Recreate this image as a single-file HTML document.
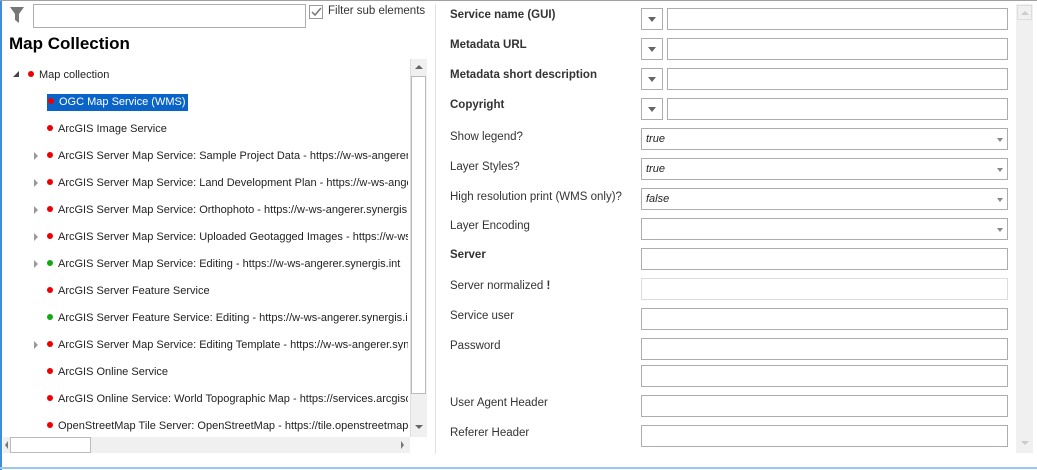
<!DOCTYPE html><html><head><style>
body{margin:0;width:1037px;height:470px;background:#fff;position:relative;overflow:hidden;font-family:"Liberation Sans",sans-serif;font-size:11px;color:#222}
.a{position:absolute}
.row{position:absolute;left:0;height:18px;line-height:18px;white-space:nowrap}
.dot{display:inline-block;width:6px;height:6px;border-radius:3px;background:#e00;margin-right:5px;vertical-align:1px}
.g{background:#1a1}
.tri{position:absolute;left:-13px;top:5px;width:0;height:0;border-left:4px solid #999;border-top:4px solid transparent;border-bottom:4px solid transparent}
.lbl{position:absolute;left:450px;font-size:11.5px;color:#333}
.b{font-weight:bold}
.box{position:absolute;border:1px solid #abadb3;background:#fff;box-sizing:border-box}
.btn{position:absolute;left:641px;width:22px;height:22px;border:1px solid #abadb3;box-sizing:border-box;background:#fff}
.btn:after{content:"";position:absolute;left:6px;top:8px;border-top:5px solid #666;border-left:4px solid transparent;border-right:4px solid transparent}
.cmb:after{content:"";position:absolute;right:4px;top:9px;border-top:4px solid #888;border-left:3px solid transparent;border-right:3px solid transparent}
.it{font-style:italic;padding-left:4px;line-height:20px}
</style></head><body>
<div class="a" style="left:0;top:0;width:2px;height:470px;background:#3c8fd8"></div>
<div class="a" style="left:0;top:467px;width:1037px;height:2px;background:#9cc6ea"></div>
<div class="a" style="left:0;top:0;width:1037px;height:1px;background:#a0a0a0"></div>
<div class="a" style="left:435px;top:4px;width:1px;height:450px;background:#e3e3e3"></div>
<svg class="a" style="left:9px;top:6px" width="16" height="18"><path d="M1 1h14l-5 7v9l-4-3V8z" fill="#777"/></svg>
<div class="box" style="left:33px;top:4px;width:273px;height:24px"></div>
<div class="box" style="left:309px;top:5px;width:14px;height:14px;border-color:#999"></div>
<svg class="a" style="left:311px;top:7px" width="11" height="10"><path d="M1 5l3 3 6-7" stroke="#777" stroke-width="1.5" fill="none"/></svg>
<div class="a" style="left:328px;top:5px;font-size:11.5px;color:#333">Filter sub elements</div>
<div class="a" style="left:9px;top:34px;font-size:17px;font-weight:bold;color:#000">Map Collection</div>
<div class="a" style="left:13px;top:71px;width:0;height:0;border-right:6px solid #444;border-top:6px solid transparent"></div>
<div class="row" style="left:28px;top:66px"><span class="dot"></span>Map collection</div>
<div class="row" style="left:47px;top:93px;color:#fff"><span style="background:#0a64c8;display:inline-block;padding:0 2px 0 1px;line-height:17px"><span class="dot"></span>OGC Map Service (WMS)</span></div>
<div class="a" style="left:0;top:110px;width:408px;height:330px;overflow:hidden">
<div class="row" style="left:47px;top:10px"><span class="dot"></span>ArcGIS Image Service</div>
<div class="row" style="left:47px;top:37px"><i class="tri"></i><span class="dot"></span>ArcGIS Server Map Service: Sample Project Data - https://w-ws-angerer.synergis.int</div>
<div class="row" style="left:47px;top:64px"><i class="tri"></i><span class="dot"></span>ArcGIS Server Map Service: Land Development Plan - https://w-ws-angerer</div>
<div class="row" style="left:47px;top:91px"><i class="tri"></i><span class="dot"></span>ArcGIS Server Map Service: Orthophoto - https://w-ws-angerer.synergis.int</div>
<div class="row" style="left:47px;top:118px"><i class="tri"></i><span class="dot"></span>ArcGIS Server Map Service: Uploaded Geotagged Images - https://w-ws</div>
<div class="row" style="left:47px;top:145px"><i class="tri"></i><span class="dot g"></span>ArcGIS Server Map Service: Editing - https://w-ws-angerer.synergis.int</div>
<div class="row" style="left:47px;top:172px"><span class="dot"></span>ArcGIS Server Feature Service</div>
<div class="row" style="left:47px;top:199px"><span class="dot g"></span>ArcGIS Server Feature Service: Editing - https://w-ws-angerer.synergis.int</div>
<div class="row" style="left:47px;top:226px"><i class="tri"></i><span class="dot"></span>ArcGIS Server Map Service: Editing Template - https://w-ws-angerer.synergis</div>
<div class="row" style="left:47px;top:253px"><span class="dot"></span>ArcGIS Online Service</div>
<div class="row" style="left:47px;top:280px"><span class="dot"></span>ArcGIS Online Service: World Topographic Map - https://services.arcgisonline</div>
<div class="row" style="left:47px;top:307px"><span class="dot"></span>OpenStreetMap Tile Server: OpenStreetMap - https://tile.openstreetmap.org</div>
</div>
<div class="a" style="left:410px;top:59px;width:17px;height:378px;background:#f0f0f0;border-left:1px solid #ddd;box-sizing:border-box"></div>
<div class="a" style="left:411px;top:76px;width:15px;height:318px;background:#fff;border:1px solid #bbb;box-sizing:border-box"></div>
<div class="a" style="left:415px;top:65px;border-bottom:4px solid #666;border-left:4px solid transparent;border-right:4px solid transparent"></div>
<div class="a" style="left:415px;top:425px;border-top:4px solid #666;border-left:4px solid transparent;border-right:4px solid transparent"></div>
<div class="a" style="left:3px;top:437px;width:407px;height:16px;background:#f0f0f0"></div>
<div class="a" style="left:10px;top:437px;width:81px;height:16px;background:#fff;border:1px solid #bbb;box-sizing:border-box"></div>
<div class="a" style="left:5px;top:441px;border-right:3px solid #777;border-top:4px solid transparent;border-bottom:4px solid transparent"></div>
<div class="a" style="left:401px;top:441px;border-left:3px solid #777;border-top:4px solid transparent;border-bottom:4px solid transparent"></div>

<div class="lbl b" style="top:9px">Service name (GUI)</div>
<div class="btn" style="top:8px"></div><div class="box" style="left:667px;top:8px;width:341px;height:22px"></div>
<div class="lbl b" style="top:39px">Metadata URL</div>
<div class="btn" style="top:38px"></div><div class="box" style="left:667px;top:38px;width:341px;height:22px"></div>
<div class="lbl b" style="top:69px">Metadata short description</div>
<div class="btn" style="top:68px"></div><div class="box" style="left:667px;top:68px;width:341px;height:22px"></div>
<div class="lbl b" style="top:99px">Copyright</div>
<div class="btn" style="top:98px"></div><div class="box" style="left:667px;top:98px;width:341px;height:22px"></div>
<div class="lbl" style="top:131px">Show legend?</div>
<div class="box cmb it" style="left:641px;top:128px;width:367px;height:22px">true</div>
<div class="lbl" style="top:161px">Layer Styles?</div>
<div class="box cmb it" style="left:641px;top:158px;width:367px;height:22px">true</div>
<div class="lbl" style="top:191px">High resolution print (WMS only)?</div>
<div class="box cmb it" style="left:641px;top:188px;width:367px;height:22px">false</div>
<div class="lbl" style="top:220px">Layer Encoding</div>
<div class="box cmb" style="left:641px;top:218px;width:367px;height:22px"></div>
<div class="lbl b" style="top:249px">Server</div>
<div class="box" style="left:641px;top:248px;width:367px;height:22px"></div>
<div class="lbl" style="top:280px">Server normalized <b>!</b></div>
<div class="box" style="left:641px;top:278px;width:367px;height:22px;border-color:#dcdcdc"></div>
<div class="lbl" style="top:310px">Service user</div>
<div class="box" style="left:641px;top:308px;width:367px;height:22px"></div>
<div class="lbl" style="top:340px">Password</div>
<div class="box" style="left:641px;top:338px;width:367px;height:22px"></div>
<div class="box" style="left:641px;top:365px;width:367px;height:22px"></div>
<div class="lbl" style="top:397px">User Agent Header</div>
<div class="box" style="left:641px;top:395px;width:367px;height:22px"></div>
<div class="lbl" style="top:427px">Referer Header</div>
<div class="box" style="left:641px;top:425px;width:367px;height:22px"></div>
<div class="a" style="left:1016px;top:4px;width:17px;height:449px;background:#f0f0f0"></div>
<div class="a" style="left:1017px;top:5px;width:15px;height:15px;border:1px solid #ddd;box-sizing:border-box"></div>
<div class="a" style="left:1021px;top:11px;border-bottom:4px solid #ccc;border-left:4px solid transparent;border-right:4px solid transparent"></div>
<div class="a" style="left:1021px;top:441px;border-top:4px solid #ccc;border-left:4px solid transparent;border-right:4px solid transparent"></div>
</body></html>
